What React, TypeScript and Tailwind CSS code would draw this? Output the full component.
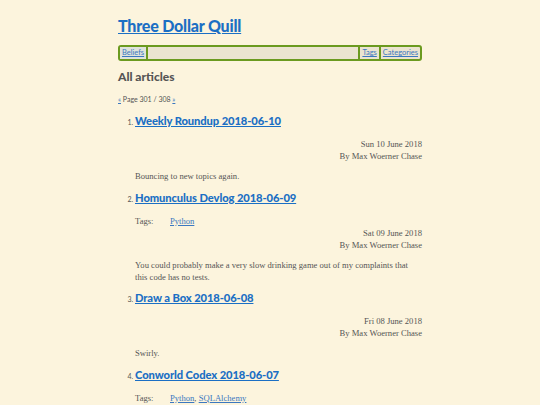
import React from 'react';

interface Article {
  title: string;
  date: string;
  tags?: string[];
  summary: string;
}

const articles: Article[] = [
  { title: 'Weekly Roundup 2018-06-10', date: 'Sun 10 June 2018', summary: 'Bouncing to new topics again.' },
  {
    title: 'Homunculus Devlog 2018-06-09',
    date: 'Sat 09 June 2018',
    tags: ['Python'],
    summary: 'You could probably make a very slow drinking game out of my complaints that this code has no tests.',
  },
  { title: 'Draw a Box 2018-06-08', date: 'Fri 08 June 2018', summary: 'Swirly.' },
  { title: 'Conworld Codex 2018-06-07', date: 'Thu 07 June 2018', tags: ['Python', 'SQLAlchemy'], summary: 'Worldbuilding.' },
];

const heading = { fontFamily: 'Lato, "Noto Sans", sans-serif' };
const body = { fontFamily: '"Liberation Serif", "DejaVu Serif", serif' };

export default function App() {
  return (
    <div className="h-[405px] w-full overflow-hidden bg-[#fcf4dd] text-[#555]" style={body}>
      <div className="mx-auto w-[304px] pt-[15px]">
        <h1 className="text-[16px] font-black leading-[22px] tracking-[-0.2px]" style={heading}>
          <a href="#" className="text-[#1b6fc4] underline">Three Dollar Quill</a>
        </h1>

        <nav className="mt-[8px] flex h-[16px] items-stretch rounded-[3px] border-2 border-[#6b9a1f] bg-[#ebe4d0] text-[7.5px]" style={heading}>
          <a href="#" className="flex items-center border-r-2 border-[#6b9a1f] bg-[#dfe3dc] px-[2px] text-[#3b78c0] underline">Beliefs</a>
          <div className="flex-1" />
          <a href="#" className="flex items-center border-l-2 border-r-2 border-[#6b9a1f] px-[2px] text-[#3b78c0] underline">Tags</a>
          <a href="#" className="flex items-center px-[2px] text-[#3b78c0] underline">Categories</a>
        </nav>

        <h2 className="mt-[8px] text-[12px] font-black leading-[16px] text-[#555]" style={heading}>All articles</h2>

        <p className="mt-[10px] text-[7px] leading-[9px]" style={heading}>
          <a href="#" className="text-[#3b78c0] underline">«</a> Page 301 / 308{' '}
          <a href="#" className="text-[#3b78c0] underline">»</a>
        </p>

        <ol className="mt-[9px] list-decimal pl-[17px] marker:text-[7px]">
          {articles.map((a) => (
            <li key={a.title} className="mb-[7.5px]" style={heading}>
              <h3 className="text-[11.2px] font-black leading-[16px] tracking-[-0.1px]">
                <a href="#" className="text-[#1b6fc4] underline">{a.title}</a>
              </h3>
              <div className="mt-[9px] text-[8.6px] leading-[12px]" style={body}>
                {a.tags && (
                  <div className="flex">
                    <span className="w-[35px]">Tags:</span>
                    <span>
                      {a.tags.map((t, i) => (
                        <React.Fragment key={t}>
                          {i > 0 && ', '}
                          <a href="#" className="text-[#3b78c0] underline">{t}</a>
                        </React.Fragment>
                      ))}
                    </span>
                  </div>
                )}
                <div className="text-right">
                  <div>{a.date}</div>
                  <div>By Max Woerner Chase</div>
                </div>
                <p className="mt-[8px]">{a.summary}</p>
              </div>
            </li>
          ))}
        </ol>
      </div>
    </div>
  );
}
